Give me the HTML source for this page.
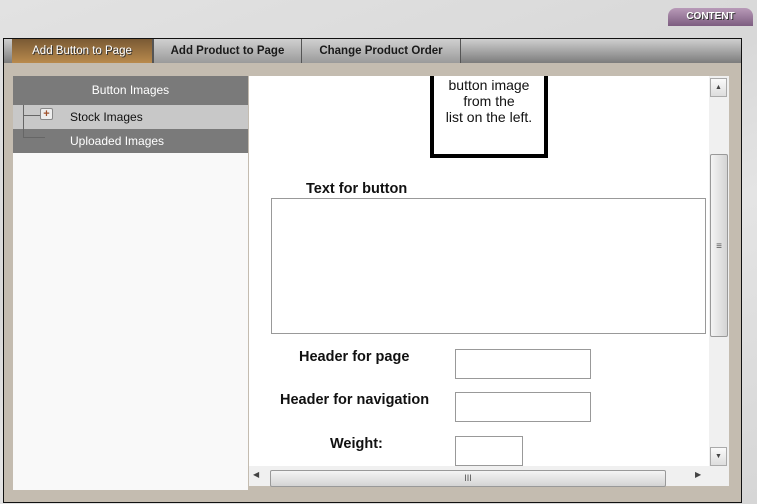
<!DOCTYPE html>
<html><head><style>
*{margin:0;padding:0;box-sizing:border-box}
body{width:757px;height:504px;overflow:hidden;position:relative;background:linear-gradient(160deg,#e2e2e2 0%,#d8d8d8 40%,#e4e4e4 60%,#d6d6d6 100%);font-family:"Liberation Sans",sans-serif}
.a{position:absolute}
.tab{position:absolute;top:39px;height:24px;font-size:11.5px;font-weight:bold;color:#1a1a1a;text-align:center;line-height:24px;background:linear-gradient(#d0d0d0,#9a9a9a);border-right:1px solid #555}
.lbl{position:absolute;font-size:14.5px;font-weight:bold;color:#111;white-space:nowrap}
.inp{position:absolute;border:1px solid #999;background:#fff}
</style></head><body>
<div class="a" style="left:668px;top:8px;width:85px;height:18px;border-radius:8px 8px 0 0;background:linear-gradient(#b89ab8,#7d5d80);color:#fff;font-size:10px;font-weight:bold;text-align:center;line-height:18px;text-shadow:1px 1px 0 #333">CONTENT</div>
<div class="a" style="left:3px;top:38px;width:739px;height:465px;border:1px solid #111;background:#c4bcb0"></div>
<div class="a" style="left:4px;top:39px;width:737px;height:24px;background:linear-gradient(#cfcfcf,#7c7c7c)"></div>
<div class="tab" style="left:12px;width:141px;background:linear-gradient(#7a5a34,#b98a4c);color:#fff;text-shadow:1px 1px 0 #333;font-weight:normal">Add Button to Page</div>
<div class="tab" style="left:153px;width:149px;border-left:1px solid #555">Add Product to Page</div>
<div class="tab" style="left:302px;width:159px">Change Product Order</div>
<div class="a" style="left:13px;top:76px;width:235px;height:414px;background:#f9f9f9"></div>
<div class="a" style="left:13px;top:76px;width:235px;height:29px;background:#7a7a7a;color:#fff;font-size:12px;text-align:center;line-height:29px">Button Images</div>
<div class="a" style="left:13px;top:105px;width:235px;height:24px;background:#c8c8c8;color:#111;font-size:12px;line-height:24px;padding-left:57px">Stock Images</div>
<div class="a" style="left:13px;top:129px;width:235px;height:24px;background:#7a7a7a;color:#fff;font-size:12px;line-height:24px;padding-left:57px">Uploaded Images</div>
<div class="a" style="left:23px;top:105px;width:1px;height:33px;background:#666"></div>
<div class="a" style="left:23px;top:115px;width:17px;height:1px;background:#666"></div>
<div class="a" style="left:23px;top:137px;width:22px;height:1px;background:#666"></div>
<div class="a" style="left:40px;top:108px;width:13px;height:12px;border:1px solid #888;border-radius:2px;background:#eee;color:#a0522d;font-size:11px;font-weight:bold;line-height:10px;text-align:center">+</div>
<div class="a" style="left:249px;top:76px;width:480px;height:410px;background:#fff"></div>
<div class="a" style="left:430px;top:76px;width:118px;height:82px;border:4px solid #000;border-top:none;font-size:14px;text-align:center;line-height:16px;color:#111;padding-top:1px;white-space:nowrap">button image<br>from the<br>list on the left.</div>
<div class="lbl" style="left:306px;top:181px">Text for button</div>
<div class="inp" style="left:271px;top:198px;width:435px;height:136px"></div>
<div class="lbl" style="left:299px;top:349px">Header for page</div>
<div class="inp" style="left:455px;top:349px;width:136px;height:30px"></div>
<div class="lbl" style="left:280px;top:392px">Header for navigation</div>
<div class="inp" style="left:455px;top:392px;width:136px;height:30px"></div>
<div class="lbl" style="left:330px;top:436px">Weight:</div>
<div class="inp" style="left:455px;top:436px;width:68px;height:30px"></div>
<div class="a" style="left:709px;top:76px;width:20px;height:390px;background:#f0f0f0"></div>
<div class="a" style="left:710px;top:78px;width:17px;height:19px;border:1px solid #aaa;background:linear-gradient(#fafafa,#ddd);font-size:7px;text-align:center;line-height:17px;color:#444">▲</div>
<div class="a" style="left:710px;top:154px;width:18px;height:183px;border:1px solid #999;border-radius:2px;background:linear-gradient(90deg,#f4f4f4,#d4d4d4);font-size:10px;text-align:center;line-height:183px;color:#555">≡</div>
<div class="a" style="left:710px;top:447px;width:17px;height:19px;border:1px solid #aaa;background:linear-gradient(#fafafa,#ddd);font-size:7px;text-align:center;line-height:17px;color:#444">▼</div>
<div class="a" style="left:249px;top:466px;width:480px;height:20px;background:#f0f0f0"></div>
<div class="a" style="left:253px;top:470px;font-size:8px;color:#444">◀</div>
<div class="a" style="left:270px;top:470px;width:396px;height:17px;border:1px solid #999;border-radius:2px;background:linear-gradient(#f4f4f4,#d4d4d4);font-size:9px;text-align:center;line-height:15px;color:#555">III</div>
<div class="a" style="left:695px;top:470px;font-size:8px;color:#444">▶</div>
</body></html>
